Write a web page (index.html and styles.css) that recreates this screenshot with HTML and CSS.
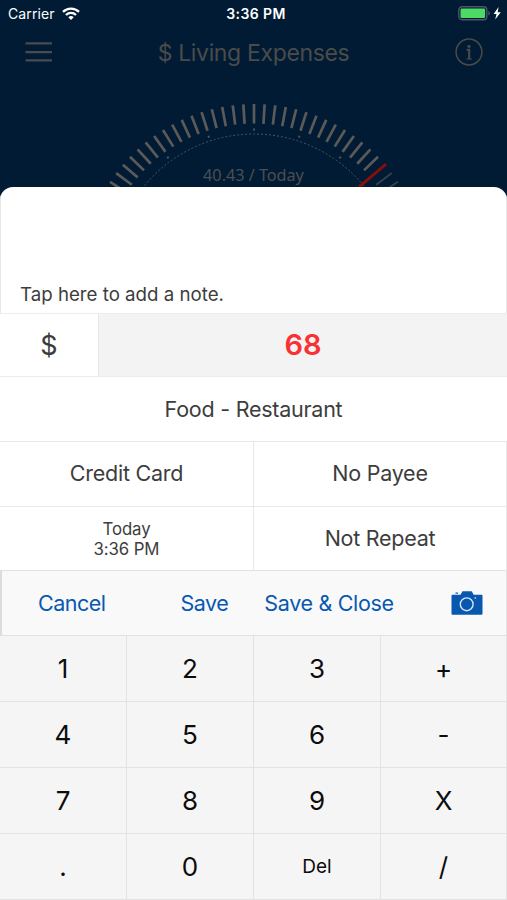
FILE: index.html
```
<!DOCTYPE html>
<html lang="en">
<head>
    <meta charset="UTF-8">
    <meta name="viewport" content="width=device-width, initial-scale=1.0">
    <title>Living Expenses</title>
    <link rel="stylesheet" href="styles.css">
</head>
<body>

    <!-- Dimmed overview behind the sheet -->
    <div class="overview">
        <div class="status-bar">
            <div class="carrier">
                <span>Carrier</span>
                <svg width="18" height="14" viewBox="0 0 18 14" fill="none" stroke="#fff" stroke-width="2.3">
                    <path d="M1 4.9a11.3 11.3 0 0 1 16 0"/>
                    <path d="M4 8a7.1 7.1 0 0 1 10 0"/>
                    <path d="M9 13 6.3 10.2a3.9 3.9 0 0 1 5.4 0z" fill="#fff" stroke="none"/>
                </svg>
            </div>
            <span class="time">3:36 PM</span>
            <div class="battery">
                <svg width="44" height="15" viewBox="0 0 44 15">
                    <rect x="0.8" y="0.8" width="28" height="13" rx="3.2" fill="none" stroke="#4c5668" stroke-width="1.4"/>
                    <rect x="2.5" y="2.6" width="24.6" height="9.4" rx="1.2" fill="#4cd964"/>
                    <path d="M30.3 5v4.6q1.7-.6 1.7-2.3t-1.7-2.3z" fill="#4c5668"/>
                    <path d="M40.6 1 35.6 8h2.9l-1.3 5.6 5.6-7.4h-3.1z" fill="#fff"/>
                </svg>
            </div>
        </div>

        <div class="nav-bar">
            <svg width="28" height="22" viewBox="0 0 28 22" stroke="#484b4f" stroke-width="2.2">
                <path d="M1.5 2.4h26.5M1.5 11.1h26.5M1.5 19.4h26.5"/>
            </svg>
            <h1>$ Living Expenses</h1>
            <svg width="28" height="28" viewBox="0 0 28 28" fill="none" stroke="#4b4a48">
                <circle cx="14" cy="14" r="12.9" stroke-width="1.5"/>
                <circle cx="14" cy="8.3" r="1.6" fill="#4b4a48" stroke="none"/>
                <path d="M11.7 11.9h2.5v8.8" stroke-width="2.2"/>
                <path d="M11.5 21h5.3" stroke-width="1.2"/>
            </svg>
        </div>

        <div class="gauge">
            <svg width="507" height="110" viewBox="0 90 507 110" id="gauge">
                <circle class="gauge-dots" cx="254" cy="276" r="142"/>
            </svg>
            <span class="gauge-label">40.43 / Today</span>
        </div>
    </div>

    <!-- New transaction sheet -->
    <div class="sheet">
        <div class="note">Tap here to add a note.</div>

        <div class="amount-row">
            <div class="currency">$</div>
            <div class="amount">68</div>
        </div>

        <div class="category">Food - Restaurant</div>

        <div class="details">
            <div class="cell account">Credit Card</div>
            <div class="cell payee">No Payee</div>
            <div class="cell date">Today<br>3:36 PM</div>
            <div class="cell repeat">Not Repeat</div>
        </div>

        <div class="toolbar">
            <span class="cancel">Cancel</span>
            <span class="save">Save</span>
            <span class="save-close">Save &amp; Close</span>
            <svg class="camera" width="32" height="24" viewBox="0 0 32 24">
                <path d="M1.5 3.7H9.5L11.5.3h9.2l2 3.4h7.8q1 0 1 1v18q0 1-1 1h-29q-1 0-1-1v-18q0-1 1-1z" fill="#0858b0"/>
                <path d="M4.5 2.1h2.6" stroke="#0858b0" stroke-width="1.2"/>
                <circle cx="15.7" cy="13.3" r="6.4" fill="none" stroke="#d6e5f5" stroke-width="1.4"/>
                <circle cx="24.3" cy="6.9" r="0.9" fill="#a9c8e8"/>
            </svg>
        </div>

        <div class="keypad">
            <div class="key">1</div>
            <div class="key">2</div>
            <div class="key">3</div>
            <div class="key">+</div>
            <div class="key">4</div>
            <div class="key">5</div>
            <div class="key">6</div>
            <div class="key">-</div>
            <div class="key">7</div>
            <div class="key">8</div>
            <div class="key">9</div>
            <div class="key">X</div>
            <div class="key">.</div>
            <div class="key">0</div>
            <div class="key del">Del</div>
            <div class="key">/</div>
        </div>
    </div>

    <script>
        const gauge = document.getElementById('gauge');

        function addLine(className, angle, from, to) {
            const line = document.createElementNS('http://www.w3.org/2000/svg', 'line');
            line.setAttribute('class', className);
            line.setAttribute('x1', 254);
            line.setAttribute('x2', 254);
            line.setAttribute('y1', 276 - from);
            line.setAttribute('y2', 276 - to);
            line.setAttribute('transform', `rotate(${angle} 254 276)`);
            gauge.appendChild(line);
        }

        // Ticks up to the current value, the pointer, then the remaining ones
        for (let i = -17; i <= 17; i++) {
            if (i < 14) {
                addLine('tick', i * 3.55, 172, 152.5);
            } else if (i === 14) {
                addLine('pointer', i * 3.55, 173, 138);
            } else {
                addLine('tick-rest', i * 3.55, 172, 152.5);
            }
        }

        // Small marks on the dotted arc
        for (let a = -36; a <= 36; a += 18) {
            addLine('mark', a, 147.5, 145.5);
        }
    </script>

</body>
</html>
```

FILE: styles.css
```
* {
    box-sizing: border-box;
}

body {
    margin: 0;
    width: 507px;
    height: 900px;
    overflow: hidden;
    background-color: #001b33;
    font-family: Inter, "Liberation Sans", sans-serif;
    color: #3d3d3d;
}

svg {
    display: block;
}

/* Overview */
.overview {
    height: 187px;
}

.status-bar {
    height: 27px;
    padding: 0 5px 0 8px;
    display: grid;
    grid-template-columns: 1fr auto 1fr;
    align-items: center;
    color: #fff;
    font-size: 14px;
}

.carrier {
    display: flex;
    align-items: center;
    gap: 7px;
    letter-spacing: 0.1px;
}

.time {
    padding-left: 2px;
    font-weight: 600;
    letter-spacing: 0.4px;
}

.battery {
    display: flex;
    justify-content: flex-end;
}

.nav-bar {
    height: 50px;
    padding: 0 24px 0 24px;
    display: flex;
    align-items: center;
    justify-content: space-between;
}

.nav-bar h1 {
    margin: 2px 0 0;
    font-size: 23px;
    font-weight: 400;
    letter-spacing: -0.35px;
    color: #4b4b4b;
}

.gauge {
    height: 110px;
    margin-top: 13px;
    display: grid;
    justify-items: center;
}

.gauge > * {
    grid-area: 1 / 1;
}

.gauge-dots {
    fill: none;
    stroke: #4a5560;
    stroke-width: 1;
    stroke-dasharray: 2 2;
}

.tick {
    stroke: #5b5a58;
    stroke-width: 2.7;
}

.tick-rest {
    stroke: #34424e;
    stroke-width: 1.8;
}

.pointer {
    stroke: #850f0f;
    stroke-width: 3;
}

.mark {
    stroke: #4a5560;
    stroke-width: 2;
}

.gauge-label {
    margin-top: 73px;
    font-family: "Noto Sans", sans-serif;
    font-size: 16.2px;
    line-height: 24px;
    color: #4b4f52;
}

/* Sheet */
.sheet {
    position: absolute;
    top: 187px;
    left: 0;
    width: 507px;
    height: 713px;
    background-color: #fff;
    border-radius: 13px 13px 0 0;
    overflow: hidden;
}

.note {
    height: 126px;
    padding: 0 19px 6px;
    display: flex;
    align-items: flex-end;
    border: solid #e6e6e6;
    border-width: 0 1px;
    font-size: 18.7px;
    line-height: 24px;
}

.amount-row {
    height: 64px;
    display: flex;
    border-top: 1px solid #ececec;
    border-bottom: 1px solid #ececec;
}

.currency {
    width: 99px;
    display: flex;
    align-items: center;
    justify-content: center;
    border-right: 1px solid #e8e8e8;
    font-size: 27px;
}

.amount {
    flex: 1;
    display: flex;
    align-items: center;
    justify-content: center;
    padding-bottom: 1px;
    background-color: #f3f3f3;
    font-size: 29px;
    font-weight: 600;
    color: #f83232;
}

.category {
    height: 64px;
    padding-bottom: 1px;
    display: flex;
    align-items: center;
    justify-content: center;
    font-size: 21.5px;
    letter-spacing: -0.25px;
}

.details {
    display: grid;
    grid-template-columns: 254px 253px;
    grid-auto-rows: 65px;
    height: 129px;
}

.cell {
    padding-bottom: 2px;
    display: flex;
    align-items: center;
    justify-content: center;
    text-align: center;
    border-top: 1px solid #e8e8e8;
    border-right: 1px solid #e8e8e8;
    font-size: 21.5px;
    letter-spacing: -0.25px;
}

.date {
    padding-bottom: 0;
    font-size: 16.8px;
    line-height: 20px;
    letter-spacing: -0.1px;
}

/* Toolbar */
.toolbar {
    height: 66px;
    display: flex;
    align-items: center;
    padding: 0 23px 0 36px;
    background-color: #f9f9f9;
    border: 1px solid #e2e2e2;
    border-left: 2px solid #dcdcdc;
    font-size: 21.5px;
    letter-spacing: -0.5px;
    color: #0858b0;
}

.save {
    margin-left: 75px;
}

.save-close {
    margin-left: 36px;
    letter-spacing: -0.33px;
}

.camera {
    margin-left: auto;
}

/* Keypad */
.keypad {
    display: grid;
    grid-template-columns: repeat(3, 127px) 126px;
    grid-auto-rows: 66px;
    background-color: #f5f5f5;
    color: #0c0c0c;
}

.key {
    display: flex;
    align-items: center;
    justify-content: center;
    border-right: 1px solid #e2e2e2;
    border-bottom: 1px solid #e2e2e2;
    font-size: 26px;
}

.key.del {
    font-size: 19px;
}
```
